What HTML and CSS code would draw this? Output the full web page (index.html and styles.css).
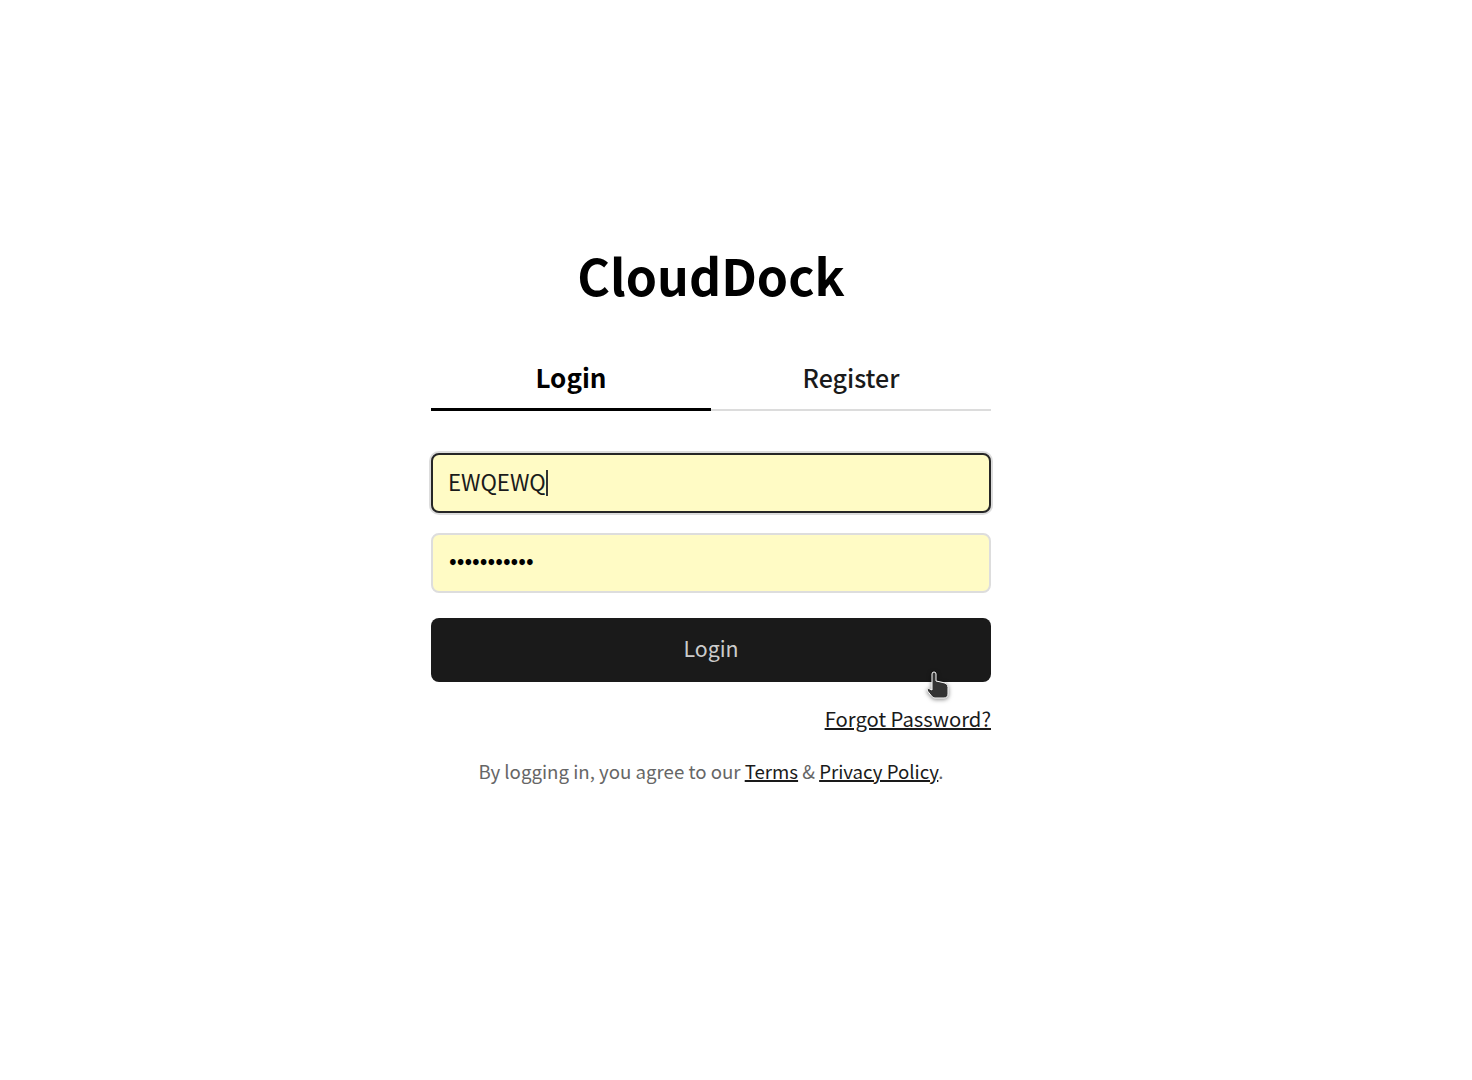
FILE: index.html
```html
<!DOCTYPE html>
<html lang="en">
<head>
  <meta charset="UTF-8" />
  <meta name="viewport" content="width=device-width, initial-scale=1" />
  <title>CloudDock - Login</title>
  <link rel="stylesheet" href="styles.css">
</head>
<body>
  <div class="container">
    <h1>CloudDock</h1>

    <div class="tabs">
      <div class="tab active">Login</div>
      <div class="tab">Register</div>
    </div>

    <form class="login-form">
      <div class="field focused">EWQEWQ<span class="caret"></span></div>
      <input class="field password" type="password" value="ewqewqewqew" />
      <button class="submit" type="button">Login</button>
    </form>

    <div class="forgot"><a href="#">Forgot Password?</a></div>
    <p class="legal">By logging in, you agree to our <a href="#">Terms</a> &amp; <a href="#">Privacy Policy</a>.</p>
  </div>

  <!-- mouse pointer from the screenshot -->
  <svg class="pointer" width="36" height="38" viewBox="0 0 36 38">
    <path d="M12 6a2 2 0 0 1 4 0v7l7 1.500c3 .6 5 2 5 5V26c0 2.500-1.500 4-4 4H15c-1.500 0-2.500-.8-3.500-2l-4-5c-1.200-1.600.8-3.200 2.300-2l2.200 1z" fill="#333" stroke="#fff" stroke-width="1"/>
  </svg>
</body>
</html>
```

FILE: styles.css
```css
body {
  font-family: "Noto Sans CJK JP", "Noto Sans", sans-serif;
  background: #fff;
  margin: 0;
  padding-top: 244px;
  color: #1a1a1a;
}
.container {
  width: 560px;
  margin-left: 431px;
}
h1 {
  margin: 0;
  font-size: 50px;
  line-height: 60px;
  font-weight: 700;
  color: #000;
  text-align: center;
}

/* Tabs */
.tabs {
  display: flex;
  margin-top: 45px;
  border-bottom: 2px solid #dcdcdc;
}
.tab {
  flex: 1;
  height: 62px;
  margin-bottom: -2px;
  line-height: 56px;
  font-size: 25px;
  font-weight: 500;
  text-align: center;
  box-sizing: border-box;
}
.tab.active {
  font-size: 26px;
  font-weight: 700;
  color: #000;
  border-bottom: 3px solid #000;
}

/* Form */
.login-form {
  display: flex;
  flex-direction: column;
  margin-top: 42px;
}
.field {
  box-sizing: border-box;
  width: 100%;
  height: 60px;
  margin-bottom: 20px;
  padding: 0 15px;
  border: 2px solid #ddd;
  border-radius: 8px;
  background: #fffbc5;
  font-family: inherit;
  font-size: 22.2px;
  line-height: 53px;
  color: #1a1a1a;
  outline: none;
}
.field.focused {
  border-color: #262626;
  box-shadow: 0 0 0 2px #ddd;
}
.field.password {
  padding: 0 15px 8px 16px;
  font-size: 22.67px;
  color: #000;
}
.caret {
  display: inline-block;
  width: 2px;
  height: 26px;
  vertical-align: -5px;
  background: #333;
}
.submit {
  height: 64px;
  margin-top: 5px;
  padding: 0 0 5px;
  border: none;
  border-radius: 8px;
  background: #1a1a1a;
  color: #ccc;
  font-family: inherit;
  font-size: 21.33px;
}
a {
  color: #1a1a1a;
  text-decoration: underline;
  text-decoration-thickness: 1.5px;
}
.forgot {
  margin-top: 20px;
  font-size: 20.25px;
  line-height: 34px;
  text-align: right;
}
.legal {
  margin: 18px 0 0;
  font-size: 18.67px;
  line-height: 34px;
  color: #666;
  text-align: center;
}
.pointer {
  position: absolute;
  left: 920px;
  top: 668px;
  filter: drop-shadow(0 1px 2px rgba(0, 0, 0, 0.5));
}
```
